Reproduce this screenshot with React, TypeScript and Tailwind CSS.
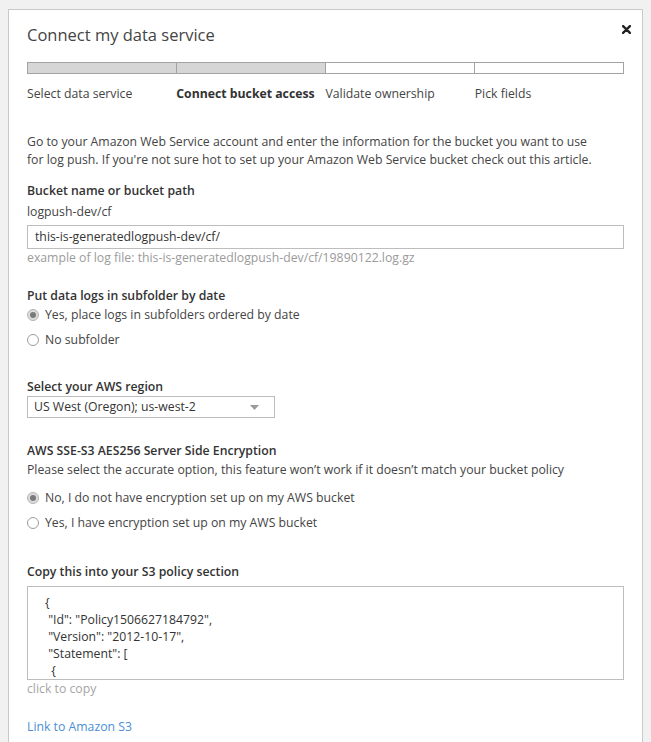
import React from "react";

const steps = [
  { label: "Select data service", done: true },
  { label: "Connect bucket access", done: true, active: true },
  { label: "Validate ownership", done: false },
  { label: "Pick fields", done: false },
];

const policyLines = ["{", ' "Id": "Policy1506627184792",', ' "Version": "2012-10-17",', ' "Statement": [', "  {"];

function Radio({ checked, label }: { checked?: boolean; label: string }) {
  return (
    <label className="flex items-center h-[16px] gap-[6px] cursor-pointer">
      <span
        className={`w-[12px] h-[12px] rounded-full border flex items-center justify-center shrink-0 ${
          checked ? "border-[#b5b5b5] bg-[#dcdcdc]" : "border-[#9d9d9d] bg-white"
        }`}
      >
        {checked && <span className="w-[6px] h-[6px] rounded-full bg-[#7a7a7a]" />}
      </span>
      <span>{label}</span>
    </label>
  );
}

export default function App() {
  return (
    <div
      className="min-h-[742px] bg-[#f1f1f1] pt-[9px] px-[8px] text-[12.25px] leading-[18px] text-[#444]"
      style={{ fontFamily: '"Open Sans", "Liberation Sans", sans-serif' }}
    >
      <div className="relative bg-white border border-[#c9c9c9] px-[18px] pt-[11px] pb-[20px]">
        {/* Close */}
        <button className="absolute right-[9px] top-[13px] p-[2px] text-[#222]" aria-label="Close">
          <svg width="9" height="9" viewBox="0 0 10 10">
            <path d="M1.2 1.2 L8.8 8.8 M8.8 1.2 L1.2 8.8" stroke="currentColor" strokeWidth="2.6" strokeLinecap="round" />
          </svg>
        </button>

        <h1 className="text-[16.5px] leading-[28px] text-[#444] font-normal">Connect my data service</h1>

        {/* Progress */}
        <div className="mt-[13px] flex h-[12px] border border-[#a3a3a3]">
          {steps.map((s, i) => (
            <div
              key={s.label}
              className={`flex-1 ${i > 0 ? "border-l border-[#a3a3a3]" : ""} ${s.done ? "bg-[#d6d6d6]" : "bg-white"}`}
            />
          ))}
        </div>
        <div className="mt-[11px] grid grid-cols-4">
          {steps.map((s) => (
            <div key={s.label} className={s.active ? "font-bold text-[#333]" : ""}>
              {s.label}
            </div>
          ))}
        </div>

        <p className="mt-[30px]">
          Go to your Amazon Web Service account and enter the information for the bucket you want to use
          <br />
          for log push. If you're not sure hot to set up your Amazon Web Service bucket check out this article.
        </p>

        {/* Bucket */}
        <h2 className="mt-[13px] font-semibold text-[#333]">Bucket name or bucket path</h2>
        <div className="mt-[3px]">logpush-dev/cf</div>
        <div className="mt-[4px] h-[24px] border border-[#bdbdbd] px-[7px] flex items-center text-[#333]">
          this-is-generatedlogpush-dev/cf/
        </div>
        <div className="text-[#9b9b9b]">example of log file: this-is-generatedlogpush-dev/cf/19890122.log.gz</div>

        {/* Subfolder */}
        <h2 className="mt-[20px] font-semibold text-[#333]">Put data logs in subfolder by date</h2>
        <div className="mt-[2px] flex flex-col gap-[9px]">
          <Radio checked label="Yes, place logs in subfolders ordered by date" />
          <Radio label="No subfolder" />
        </div>

        {/* Region */}
        <h2 className="mt-[30px] font-semibold text-[#333]">Select your AWS region</h2>
        <div className="w-[248px] h-[22px] border border-[#bdbdbd] px-[6px] flex items-center justify-between text-[#333]">
          <span>US West (Oregon); us-west-2</span>
          <svg width="9" height="5" viewBox="0 0 9 5" className="mr-[9px]">
            <path d="M0 0 L9 0 L4.5 5 Z" fill="#9a9a9a" />
          </svg>
        </div>

        {/* Encryption */}
        <h2 className="mt-[24px] font-semibold text-[#333]">AWS SSE-S3 AES256 Server Side Encryption</h2>
        <p className="mt-[1px]">Please select the accurate option, this feature won’t work if it doesn’t match your bucket policy</p>
        <div className="mt-[11px] flex flex-col gap-[9px]">
          <Radio checked label="No, I do not have encryption set up on my AWS bucket" />
          <Radio label="Yes, I have encryption set up on my AWS bucket" />
        </div>

        {/* Policy */}
        <h2 className="mt-[32px] font-semibold text-[#333]">Copy this into your S3 policy section</h2>
        <div className="mt-[5px] h-[94px] border border-[#bdbdbd] pl-[17px] pt-[7px] overflow-hidden text-[#333] leading-[17px]">
          {policyLines.map((l, i) => (
            <div key={i} className="whitespace-pre">
              {l}
            </div>
          ))}
        </div>
        <div className="text-[#a5a5a5]">click to copy</div>

        <a href="#" className="mt-[20px] block w-fit text-[#4a8fd4]">
          Link to Amazon S3
        </a>
      </div>
    </div>
  );
}
